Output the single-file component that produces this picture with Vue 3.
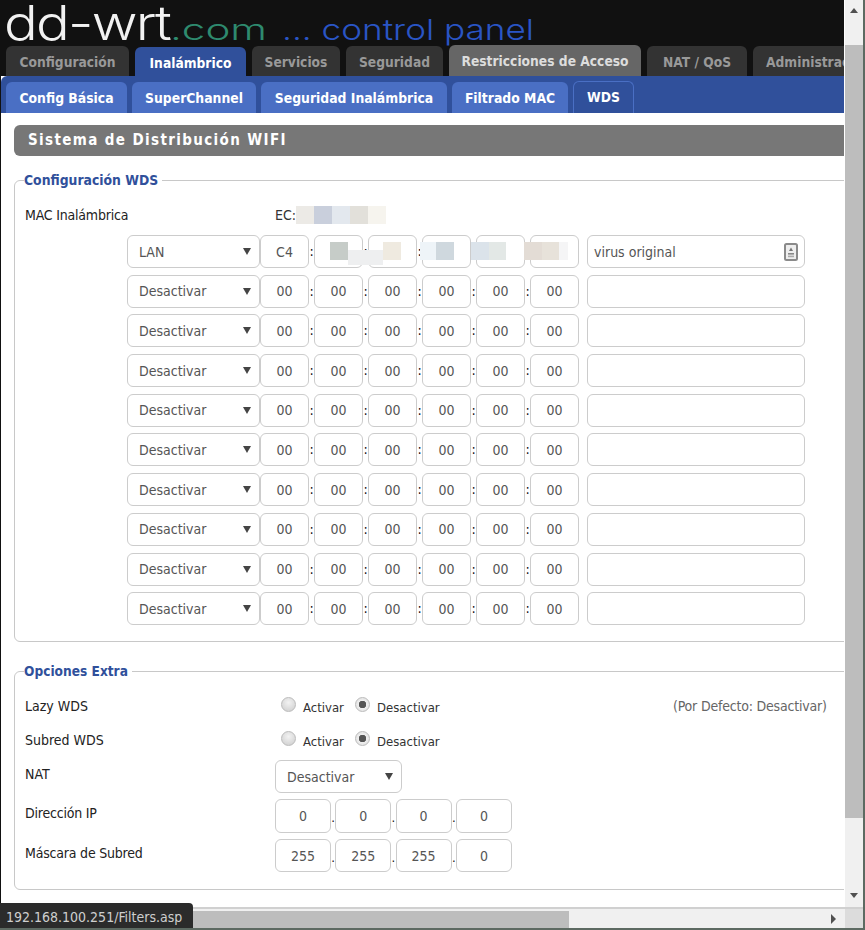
<script setup>
const mainTabs = [
  { t: 'Configuración', c: 'dark' },
  { t: 'Inalámbrico', c: 'active' },
  { t: 'Servicios', c: 'dark' },
  { t: 'Seguridad', c: 'dark' },
  { t: 'Restricciones de Acceso', c: 'hover' },
  { t: 'NAT / QoS', c: 'dark' },
  { t: 'Administración', c: 'dark last' }
]
const subTabs = [
  { t: 'Config Básica', c: '' },
  { t: 'SuperChannel', c: '' },
  { t: 'Seguridad Inalámbrica', c: '' },
  { t: 'Filtrado MAC', c: '' },
  { t: 'WDS', c: 'current' }
]
const macBlur = [
  { x: 21, y: 0, w: 18, h: 18, c: '#eceae6' },
  { x: 39, y: 0, w: 18, h: 18, c: '#c9cfdc' },
  { x: 57, y: 0, w: 18, h: 18, c: '#e3e8ee' },
  { x: 75, y: 0, w: 18, h: 18, c: '#e2e0da' },
  { x: 93, y: 0, w: 18, h: 18, c: '#f6f4ee' }
]
const rowBlur = [
  { x: 203, y: 7, w: 18, h: 18, c: '#c6ccc8' },
  { x: 221, y: 15, w: 35, h: 15, c: '#eeeff0' },
  { x: 256, y: 7, w: 18, h: 18, c: '#efeae0' },
  { x: 293, y: 7, w: 16, h: 18, c: '#eef4f8' },
  { x: 309, y: 7, w: 18, h: 18, c: '#cfd8de' },
  { x: 344, y: 7, w: 18, h: 18, c: '#dbe3ea' },
  { x: 362, y: 7, w: 17, h: 18, c: '#e3e8e6' },
  { x: 397, y: 7, w: 18, h: 18, c: '#e3dcd5' },
  { x: 415, y: 7, w: 17, h: 18, c: '#e7e2da' },
  { x: 432, y: 7, w: 9, h: 18, c: '#f5f5f6' }
]
const rows = [
  { mode: 'LAN', mac: ['C4', '', '', '', '', ''], name: 'virus original', first: true }
]
for (let i = 0; i < 9; i++) {
  rows.push({ mode: 'Desactivar', mac: ['00', '00', '00', '00', '00', '00'], name: '', first: false })
}
const radios = ['Lazy WDS', 'Subred WDS']
const ips = [
  { label: 'Dirección IP', parts: ['0', '0', '0', '0'], c: 'ip' },
  { label: 'Máscara de Subred', parts: ['255', '255', '255', '0'], c: 'mask' }
]
const blurStyle = (b) => ({ left: b.x + 'px', top: b.y + 'px', width: b.w + 'px', height: b.h + 'px', background: b.c })
</script>

<template>
  <div class="window">
    <div class="main">
      <div class="viewport">
        <header class="head">
          <div class="logo">
            <span class="l-dd">dd-wrt</span>
            <span class="l-com">.com</span>
            <span class="l-cp">... control panel</span>
          </div>
          <nav class="tabs">
            <div v-for="m in mainTabs" :key="m.t" class="tab" :class="m.c">{{ m.t }}</div>
          </nav>
        </header>
        <nav class="subbar">
          <div v-for="s in subTabs" :key="s.t" class="sub" :class="s.c">{{ s.t }}</div>
        </nav>
        <section class="content">
          <h2 class="title">Sistema de Distribución WIFI</h2>

          <fieldset class="fs first">
            <legend>Configuración WDS</legend>
            <div class="mac-line">
              <span class="lab tight">MAC Inalámbrica</span>
              <span class="mac-val">EC:
                <i v-for="b in macBlur" :key="b.x" class="blur" :style="blurStyle(b)"></i>
              </span>
            </div>
            <div class="wds">
              <div v-for="(r, i) in rows" :key="i" class="wds-row">
                <div class="field sel">{{ r.mode }}</div>
                <template v-for="(v, j) in r.mac" :key="j">
                  <span v-if="j" class="sep">:</span>
                  <div class="field cell">{{ v }}</div>
                </template>
                <div class="field name">
                  <span>{{ r.name }}</span>
                  <svg v-if="r.first" class="idicon" width="14" height="18" viewBox="0 0 14 18">
                    <rect x="1" y="1" width="12" height="16" rx="1.5" fill="#eee" stroke="#8a8a8a" stroke-width="2" />
                    <path d="M7 4.5 9 8H5z" fill="#777" />
                    <rect x="4" y="10" width="6" height="1.6" fill="#888" />
                    <rect x="4" y="12.6" width="6" height="1.6" fill="#aaa" />
                  </svg>
                </div>
                <template v-if="r.first">
                  <i v-for="b in rowBlur" :key="b.x" class="blur" :style="blurStyle(b)"></i>
                </template>
              </div>
            </div>
          </fieldset>

          <fieldset class="fs second">
            <legend>Opciones Extra</legend>
            <div v-for="(n, i) in radios" :key="n" class="opt radio-row">
              <span class="lab">{{ n }}</span>
              <div class="radios">
                <span class="radio"></span><span class="rt a">Activar</span>
                <span class="radio on"></span><span class="rt">Desactivar</span>
              </div>
              <span v-if="i === 0" class="dflt">(Por Defecto: Desactivar)</span>
            </div>
            <div class="opt nat">
              <span class="lab top">NAT</span>
              <div class="field sel small">Desactivar</div>
            </div>
            <div v-for="p in ips" :key="p.label" class="opt" :class="p.c">
              <span class="lab top tight">{{ p.label }}</span>
              <div class="ipset">
                <template v-for="(v, j) in p.parts" :key="j">
                  <span v-if="j" class="dot">.</span>
                  <div class="field ipc">{{ v }}</div>
                </template>
              </div>
            </div>
          </fieldset>
        </section>
      </div>

      <aside class="vbar">
        <span class="arr up"></span>
        <div class="vthumb"></div>
        <span class="arr down"></span>
      </aside>
    </div>

    <footer class="hbar">
      <div class="htrack">
        <div class="hthumb"></div>
        <span class="arr right"></span>
      </div>
      <div class="corner"></div>
    </footer>

    <div class="status">192.168.100.251/Filters.asp</div>
  </div>
</template>

<style>
html, body { margin: 0; background: #111; }
</style>

<style scoped>
.window {
  position: relative;
  width: 863px;
  height: 928px;
  border-right: 2px solid #5d6a62;
  border-bottom: 2px solid #5d6a62;
  overflow: hidden;
  display: flex;
  flex-direction: column;
  font-family: "DejaVu Sans Condensed", "DejaVu Sans", sans-serif;
  font-stretch: condensed;
  font-size: 14px;
  color: #222;
  background: #fff;
}
.main { flex: 1; display: flex; min-height: 0; }
.viewport {
  width: 844px;
  margin-right: 1px;
  border-left: 1px solid #111;
  overflow: hidden;
  background: #fff;
}
.head { height: 76px; background: #111; width: 844px; }
.logo { height: 45px; display: flex; align-items: baseline; white-space: nowrap; }
.logo span { display: block; font-family: Inter, "Liberation Sans", sans-serif; font-stretch: normal; font-weight: 300; transform-origin: 0 100%; }
.l-dd {
  width: 166px; margin-left: 3px;
  font-size: 48px; line-height: 45px; color: #f2f2f2;
  letter-spacing: -1.5px;
  transform: scaleX(1.17);
}
.l-com {
  width: 112px; font-size: 29px; line-height: 45px; color: #2e8a6e;
  transform: scaleX(1.45);
}
.l-cp {
  width: 280px; font-size: 29px; line-height: 45px; color: #2a55c4;
  transform: scaleX(1.21);
}
.tabs {
  height: 31px;
  display: grid;
  grid-template-columns: 123px 111px 88px 97px 192px 100px 150px;
  column-gap: 6px;
  padding-left: 5px;
  align-items: end;
}
.tab {
  font-weight: 700;
  font-size: 13.7px;
  text-align: center;
  border-radius: 6px 6px 0 0;
  white-space: nowrap;
}
.tab.dark { height: 30px; line-height: 32px; background: #333; color: #999; }
.tab.active { height: 29px; line-height: 33px; background: #30509b; color: #fff; }
.tab.hover { height: 31px; line-height: 32px; background: #666; color: #ddd; }
.tab.last { text-align: left; padding-left: 13px; }
.subbar {
  height: 37px;
  background: #30509b;
  border-radius: 6px 0 0 0;
  display: grid;
  grid-template-columns: 121px 124px 186px 116px 61px;
  column-gap: 5px;
  padding-left: 5px;
  align-items: end;
}
.sub {
  height: 31px;
  line-height: 32px;
  background: #4a6fc4;
  color: #fff;
  font-weight: 700;
  font-size: 13.8px;
  text-align: center;
  border-radius: 6px 6px 0 0;
  white-space: nowrap;
}
.sub.current {
  height: 32px;
  background: #30509b;
  border: 1px solid #4a6fc4;
  border-bottom: 0;
  line-height: 31px;
  box-sizing: border-box;
}
.content { padding: 12px 0 0 13px; width: 1100px; }
.title {
  margin: 0;
  height: 31px;
  line-height: 31px;
  background: #777;
  color: #fff;
  border-radius: 6px 0 0 6px;
  font-size: 15px;
  font-weight: 700;
  letter-spacing: 1.37px;
  padding-left: 14px;
}
.fs {
  margin: 0;
  border: 1px solid #c8c8c8;
  border-radius: 6px;
  min-width: 0;
  padding: 0 0 0 10px;
}
.fs legend {
  margin-left: -1px;
  padding: 0 4px 0 0;
  color: #30509b;
  font-size: 13.8px;
  font-weight: 700;
  line-height: 18px;
}
.fs.first { margin-top: 15px; padding-bottom: 16px; }
.fs.second { margin-top: 20px; padding-bottom: 17px; }
.fs.second legend { margin-bottom: 9px; font-size: 13.6px; }
.lab { color: #222; line-height: 20px; }
.tight { letter-spacing: -0.2px; }
.mac-line { display: flex; height: 20px; margin-top: 16px; }
.mac-line .lab { width: 250px; }
.mac-val { position: relative; display: block; line-height: 20px; color: #333; }
.blur { position: absolute; display: block; }
.mac-val .blur { margin-top: 1px; }
.wds { margin-top: 10px; margin-left: 102px; display: flex; flex-direction: column; row-gap: 6.7px; }
.wds-row { position: relative; display: flex; height: 33px; }
.field {
  box-sizing: border-box;
  border: 1px solid #ccc;
  border-radius: 6px;
  background: #fff;
  color: #555;
  font-size: 14px;
  display: flex;
  align-items: center;
  white-space: nowrap;
}
.sel { position: relative; width: 133px; padding-left: 11px; }
.sel::after {
  content: "";
  position: absolute;
  right: 8px;
  top: 12px;
  border-left: 4px solid transparent;
  border-right: 4px solid transparent;
  border-top: 7px solid #444;
}
.sel.small { width: 127px; height: 33px; }
.cell { width: 49px; justify-content: center; }
.sep { width: 5px; text-align: center; color: #111; line-height: 33px; font-size: 14px; }
.name { width: 218px; margin-left: 8px; padding: 0 6px; justify-content: space-between; }
.idicon { flex: none; }
.opt { display: flex; }
.opt > .lab { width: 250px; flex: none; }
.lab.top { padding-top: 4px; }
.radio-row { height: 34px; align-items: center; position: relative; }
.radios { display: flex; align-items: center; padding-left: 6px; }
.radio {
  box-sizing: border-box;
  width: 15px;
  height: 15px;
  border-radius: 50%;
  border: 1px solid #bbb;
  background: radial-gradient(circle at 50% 35%, #f2f2f2, #ccc);
  position: relative;
  top: -2px;
}
.radio.on { background: radial-gradient(circle, #555 0 3.5px, #eee 4px, #ddd 100%); }
.rt { margin-left: 7px; position: relative; top: 1px; color: #333; font-size: 13px; }
.rt.a { width: 46px; margin-right: 6px; }
.dflt { position: absolute; left: 648px; color: #666; white-space: nowrap; letter-spacing: -0.2px; }
.nat { margin-top: 3px; height: 33px; }
.ip { margin-top: 6px; height: 34px; }
.mask { margin-top: 6px; height: 33px; }
.ipset { display: flex; }
.ipc { width: 56px; justify-content: center; }
.dot { width: 4.3px; text-align: center; color: #111; line-height: 38px; font-size: 13px; }
.vbar {
  width: 18px;
  background: #f0f0f0;
  position: relative;
  display: flex;
  flex-direction: column;
  align-items: stretch;
}
.vthumb { margin: 45px 0 0; height: 773px; background: #bdbdbd; }
.arr { position: absolute; width: 0; height: 0; }
.up { left: 5px; top: 8px; border-left: 4.5px solid transparent; border-right: 4.5px solid transparent; border-bottom: 5px solid #505050; }
.down { left: 5px; top: 893px; border-left: 4.5px solid transparent; border-right: 4.5px solid transparent; border-top: 5px solid #505050; }
.right { left: 831px; top: 5px; border-top: 5px solid transparent; border-bottom: 5px solid transparent; border-left: 5px solid #505050; }
.hbar { height: 21px; display: flex; border-top: 2px solid #d0d0d0; box-sizing: border-box; }
.htrack { position: relative; width: 845px; background: #f0f0f0; }
.hthumb { margin-top: 2px; width: 569px; height: 17px; background: #bdbdbd; }
.corner { flex: 1; background: #dcdcdc; }
.status {
  position: absolute;
  left: 0;
  bottom: -2px;
  width: 193px;
  height: 27px;
  line-height: 28px;
  box-sizing: border-box;
  padding-left: 6px;
  background: #2b2b2b;
  color: #cfcfcf;
  font-size: 14px;
  border-radius: 0 4px 0 0;
  white-space: nowrap;
}
</style>
